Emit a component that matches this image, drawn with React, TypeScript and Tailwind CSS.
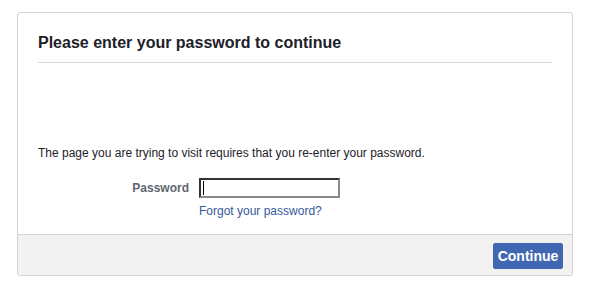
export default function App() {
  return (
    <div className="min-h-screen bg-white pt-[12px] pl-[17px] font-['Liberation_Sans',Arial,sans-serif]">
      <div className="w-[556px] rounded-[3px] border border-[#d3d3d3] bg-white overflow-hidden">
        <div className="px-[20px]">
          <div className="border-b border-[#d3d6db] pt-[20px] pb-[9px]">
            <h2 className="text-[16px] leading-[20px] font-bold text-[#1d2129]">
              Please enter your password to continue
            </h2>
          </div>
          <div className="pt-[82px]">
            <p className="text-[12px] leading-[16px] text-[#1d2129]">
              The page you are trying to visit requires that you re-enter your password.
            </p>
          </div>
          <div className="mt-[17px] flex items-center">
            <label className="w-[161px] pr-[10px] text-right text-[12px] font-bold leading-[16px] text-[#606770]">
              Password
            </label>
            <div className="flex h-[20px] w-[141px] items-center border-2 border-t-[#333] border-l-[#333] border-b-[#8a8a8a] border-r-[#8a8a8a] bg-white pl-[2px]">
              <span className="h-[14px] w-px bg-black" />
            </div>
          </div>
          <div className="mt-[5px] pl-[161px] pb-[15px] text-[12px] leading-[16px]">
            <a className="text-[#365899]" href="#">
              Forgot your password?
            </a>
          </div>
        </div>
        <div className="flex justify-end border-t border-[#d3d3d3] bg-[#f2f2f2] pt-[8px] pb-[6px] pr-[9px]">
          <button className="flex h-[26px] w-[70px] items-center justify-center rounded-[2px] border border-[#4267b2] bg-[#4267b2] text-[14px] font-bold text-white">
            Continue
          </button>
        </div>
      </div>
    </div>
  );
}
